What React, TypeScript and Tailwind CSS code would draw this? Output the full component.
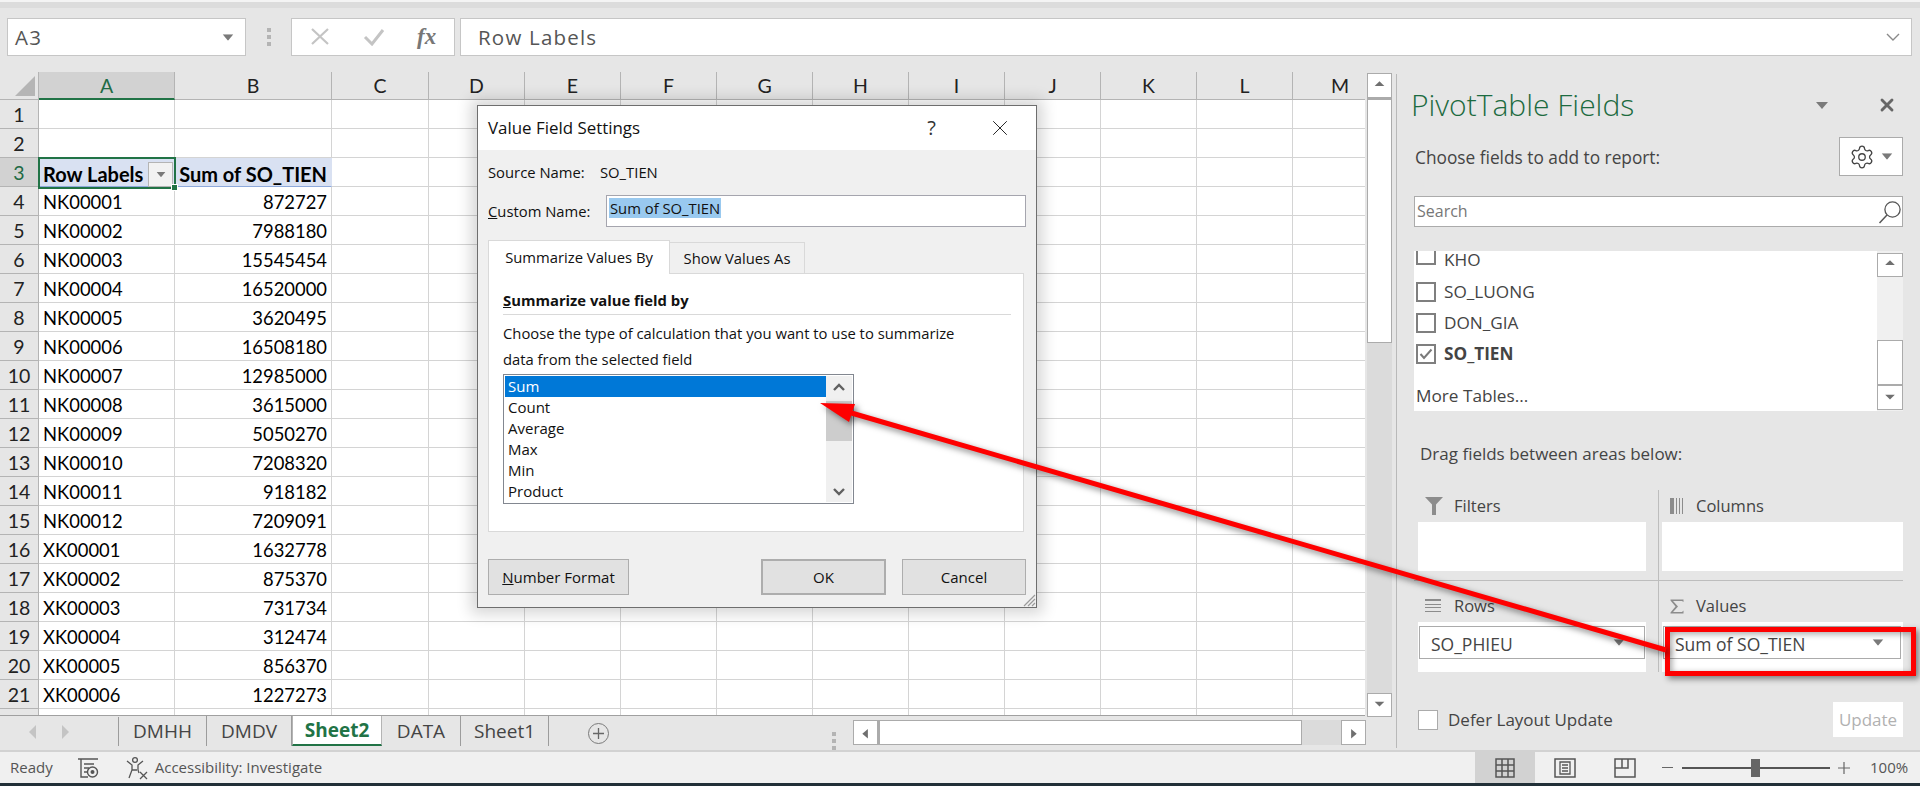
import { Settings, X as CloseIcon } from "lucide-react";

const colWidths = [136, 157, 97, 96, 96, 96, 96, 96, 96, 96, 96, 96, 73];
const colNames = ["A", "B", "C", "D", "E", "F", "G", "H", "I", "J", "K", "L", "M"];

const rows: [string, string][] = [
  ["NK00001", "872727"],
  ["NK00002", "7988180"],
  ["NK00003", "15545454"],
  ["NK00004", "16520000"],
  ["NK00005", "3620495"],
  ["NK00006", "16508180"],
  ["NK00007", "12985000"],
  ["NK00008", "3615000"],
  ["NK00009", "5050270"],
  ["NK00010", "7208320"],
  ["NK00011", "918182"],
  ["NK00012", "7209091"],
  ["XK00001", "1632778"],
  ["XK00002", "875370"],
  ["XK00003", "731734"],
  ["XK00004", "312474"],
  ["XK00005", "856370"],
  ["XK00006", "1227273"],
];

const Caret = ({ className = "" }: { className?: string }) => (
  <svg width="12" height="7" viewBox="0 0 12 7" className={className}>
    <path d="M0 0h12L6 7z" fill="#7a7a7a" />
  </svg>
);

const ArrowBtn = ({ dir, className = "" }: { dir: "up" | "down" | "left" | "right"; className?: string }) => {
  const d = {
    up: "M6 10h12l-6-6z",
    down: "M6 6h12l-6 6z",
    left: "M15 5v12L8 11z",
    right: "M9 5v12l7-6z",
  }[dir];
  return (
    <div className={`bg-white border border-[#ababab] flex items-center justify-center shrink-0 ${className}`}>
      <svg width="24" height="16" viewBox="0 0 24 20">
        <path d={d} fill="#6f6f6f" />
      </svg>
    </div>
  );
};

const RowHeader = ({ n, active }: { n?: number; active?: boolean }) => (
  <div
    className={`w-[39px] shrink-0 h-full border-r border-b border-[#b4b4b4] flex items-center justify-center pt-px font-['Lato'] text-[19.5px] ${
      active ? "bg-[#d2d2d2] text-[#1f6b45]" : "bg-[#e6e6e6] text-[#222]"
    }`}
  >
    {n}
  </div>
);

const SheetRow = ({ n, a, b, header }: { n?: number; a?: string; b?: string; header?: boolean }) => (
  <div className="flex h-[29px] shrink-0">
    <RowHeader n={n} active={header} />
    {colWidths.map((w, i) => (
      <div
        key={i}
        style={{ width: w }}
        className={`h-full shrink-0 border-r border-b border-[#d4d4d4] font-['Lato'] text-black flex items-center px-1 pt-[3px] overflow-hidden whitespace-nowrap ${
          header && i < 2 ? "bg-[#d9e1f2] border-b-[#8ea9db] border-r-[#d9e1f2] font-bold text-[20px]" : "bg-white text-[18.4px]"
        } ${i === 1 ? "justify-end" : ""}`}
      >
        {i === 0 ? a : i === 1 ? b : ""}
      </div>
    ))}
  </div>
);

const Checkbox = ({ checked, className = "" }: { checked?: boolean; className?: string }) => (
  <div className={`w-5 h-5 border-2 border-[#7f7f7f] bg-white flex items-center justify-center shrink-0 ${className}`}>
    {checked && (
      <svg width="14" height="12" viewBox="0 0 14 12">
        <path d="M1.5 6l3.5 4L12.5 1.5" fill="none" stroke="#7a7a7a" strokeWidth="2" />
      </svg>
    )}
  </div>
);

const DlgButton = ({ children, className = "" }: { children: React.ReactNode; className?: string }) => (
  <div className={`h-[36px] bg-[#e1e1e1] border border-[#adadad] flex items-center justify-center text-[15px] text-[#111] ${className}`}>
    {children}
  </div>
);

const ValueFieldDialog = () => (
  <div className="absolute left-[477px] top-[105px] w-[560px] h-[503px] bg-[#f0f0f0] border border-[#6e6e6e] shadow-[0_0_14px_6px_rgba(0,0,0,0.16)] flex flex-col text-[14.8px] text-[#111]">
    <div className="h-[44px] bg-white shrink-0 flex items-center pl-[10px] pr-[23px]">
      <span className="text-[16.9px] flex-1">Value Field Settings</span>
      <span className="text-[20px] text-[#333] mr-[51px]">?</span>
      <CloseIcon size={26} strokeWidth={0.9} color="#222" />
    </div>
    <div className="px-[10px] flex flex-col">
      <div className="flex items-center h-[20px] mt-[12px]">
        <span className="w-[112px]">Source Name:</span>
        <span>SO_TIEN</span>
      </div>
      <div className="flex items-center mt-[13px]">
        <span className="w-[118px]">
          <u>C</u>ustom Name:
        </span>
        <div className="w-[420px] h-[32px] bg-white border border-[#a5a5ae] flex items-start pl-[2px] pt-[2px]">
          <span className="bg-[#99c9ef] h-[20px] leading-[20px] px-px">Sum of SO_TIEN</span>
        </div>
      </div>
      <div className="flex items-end mt-[13px] h-[34px]">
        <div className="w-[182px] h-[34px] bg-white border border-b-0 border-[#d9d9d9] flex items-center justify-center relative z-10">
          Summarize Values By
        </div>
        <div className="w-[135px] h-[32px] border border-l-0 border-b-0 border-[#d9d9d9] flex items-center justify-center">
          Show Values As
        </div>
      </div>
      <div className="w-[536px] h-[259px] bg-white border border-[#d9d9d9] px-[14px] -mt-px flex flex-col">
        <div className="font-bold h-[41px] pt-[11px] leading-[24px] border-b border-[#d9d9d9] w-[508px] flex items-center shrink-0">
          <span>
            <u>S</u>ummarize value field by
          </span>
        </div>
        <div className="mt-[5px] leading-[26px]">
          <div>Choose the type of calculation that you want to use to summarize</div>
          <div>data from the selected field</div>
        </div>
        <div className="w-[351px] h-[130px] mt-[2px] border border-[#828790] p-px flex">
          <div className="w-[321px] flex flex-col text-[15px]">
            {["Sum", "Count", "Average", "Max", "Min", "Product"].map((t, i) => (
              <div key={t} className={`h-[21px] leading-[21px] pl-[3px] ${i === 0 ? "bg-[#0078d7] text-white" : ""}`}>
                {t}
              </div>
            ))}
          </div>
          <div className="flex-1 bg-[#f0f0f0] flex flex-col">
            <div className="h-[25px] flex items-center justify-center pb-[4px]">
              <svg width="14" height="10" viewBox="0 0 14 10">
                <path d="M2 8l5-5 5 5" fill="none" stroke="#606060" strokeWidth="2.4" />
              </svg>
            </div>
            <div className="h-[40px] bg-[#cdcdcd]" />
            <div className="flex-1 flex items-end justify-center pb-[5px]">
              <svg width="14" height="10" viewBox="0 0 14 10">
                <path d="M2 2l5 5 5-5" fill="none" stroke="#606060" strokeWidth="2.4" />
              </svg>
            </div>
          </div>
        </div>
      </div>
      <div className="flex mt-[27px]">
        <DlgButton className="w-[141px]">
          <span>
            <u>N</u>umber Format
          </span>
        </DlgButton>
        <DlgButton className="w-[125px] ml-[132px] border-2 border-[#0078d7]">OK</DlgButton>
        <DlgButton className="w-[124px] ml-[16px]">Cancel</DlgButton>
      </div>
    </div>
    <svg width="14" height="14" viewBox="0 0 14 14" className="absolute right-0 bottom-0">
      <path d="M13 2L2 13M13 6L6 13M13 10L10 13" stroke="#9a9a9a" strokeWidth="1.2" />
    </svg>
  </div>
);

const AreaLabel = ({ icon, label, className = "", iconBox }: { icon: React.ReactNode; label: string; className?: string; iconBox: string }) => (
  <div className={`flex items-center h-[32px] text-[16.5px] text-[#444] ${className}`}>
    <div className={`shrink-0 flex items-center ${iconBox}`}>{icon}</div>
    {label}
  </div>
);

const FieldsPane = () => (
  <div className="flex-1 border-l border-[#b9b9b9] ml-[3px] mt-[2px] mb-[2px] pl-[17px] pr-[17px] flex flex-col text-[#444] relative">
    <div className="flex items-center h-[44px] mt-[9px]">
      <span className="text-[30px] font-light text-[#1c6b40] flex-1 -ml-[3px] pb-[2px]">PivotTable Fields</span>
      <Caret className="mr-[49px]" />
      <CloseIcon size={20} strokeWidth={3.4} color="#666" className="mr-[6px]" />
    </div>
    <div className="flex items-center justify-between h-[39px] mt-[10px]">
      <span className="text-[17.3px] ml-px pt-[2px]">Choose fields to add to report:</span>
      <div className="w-[64px] h-[39px] bg-white border border-[#ababab] flex items-center justify-center gap-[6px]">
        <Settings size={26} strokeWidth={1.2} color="#444" />
        <Caret className="scale-90" />
      </div>
    </div>
    <div className="h-[31px] mt-[20px] bg-white border border-[#ababab] flex items-center pl-[2px] text-[16px] text-[#777] justify-between">
      <span className="pb-[2px]">Search</span>
      <svg width="24" height="26" viewBox="0 0 24 26">
        <circle cx="14.5" cy="10.5" r="7.6" fill="none" stroke="#555" strokeWidth="1.3" />
        <path d="M9 16L1.5 24" stroke="#555" strokeWidth="1.5" />
      </svg>
    </div>
    <div className="h-[160px] mt-[24px] bg-white flex overflow-hidden">
      <div className="flex-1 pl-[2px] -mt-[6px] text-[17.2px]">
        <div className="flex items-center gap-[8px] h-[31px] -mt-[1px]">
          <Checkbox className="-mt-[9px]" />
          KHO
        </div>
        <div className="flex items-center gap-[8px] h-[31px] mt-[1px]">
          <Checkbox />
          SO_LUONG
        </div>
        <div className="flex items-center gap-[8px] h-[31px]">
          <Checkbox />
          DON_GIA
        </div>
        <div className="flex items-center gap-[8px] h-[31px] font-bold">
          <Checkbox checked />
          SO_TIEN
        </div>
        <div className="mt-[15px] h-[24px] leading-[24px]">More Tables...</div>
      </div>
      <div className="w-[26px] h-full flex flex-col pt-[2px] bg-[#f0f0f0]">
        <ArrowBtn dir="up" className="h-[24px]" />
        <div className="h-[63px]" />
        <div className="h-[45px] bg-white border border-[#ababab]" />
        <ArrowBtn dir="down" className="h-[25px]" />
      </div>
    </div>
    <div className="text-[17px] mt-[31px] ml-[6px] h-[24px] leading-[24px]">Drag fields between areas below:</div>
    <div className="mt-[24px] grid grid-cols-[245px_1fr] relative">
      <div className="pr-[12px] pl-[4px] border-r border-b border-[#bdbdbd] pb-[9px]">
        <AreaLabel
          label="Filters"
          iconBox="w-[36px] pl-[6px]"
          icon={
            <svg width="20" height="18" viewBox="0 0 20 18">
              <path d="M1 0h18l-7 7.5V18H8V7.500z" fill="#8c8c8c" />
            </svg>
          }
        />
        <div className="h-[49px] bg-white" />
      </div>
      <div className="pl-[3px] border-b border-[#bdbdbd] pb-[9px]">
        <AreaLabel
          label="Columns"
          className="pl-[8px]"
          iconBox="w-[26px]"
          icon={
            <svg width="14" height="16" viewBox="0 0 14 16">
              <path d="M0 0h4v16H0zM6 0h1v16H6zM9 0h1v16H9zM12 0h1v16h-1z" fill="#8c8c8c" />
            </svg>
          }
        />
        <div className="h-[49px] bg-white" />
      </div>
      <div className="pr-[12px] pl-[4px] border-r border-[#bdbdbd]">
        <AreaLabel
          label="Rows"
          className="mt-[9px]"
          iconBox="w-[36px] pl-[7px]"
          icon={
            <svg width="16" height="14" viewBox="0 0 16 14">
              <path d="M0 0h16v2H0zM0 5h16v1H0zM0 8h16v1H0zM0 12h16v1H0z" fill="#8c8c8c" />
            </svg>
          }
        />
        <div className="h-[50px] bg-white pt-[4px] px-px">
          <div className="h-[33px] border border-[#ababab] flex items-center justify-between pl-[11px] pr-[19px] text-[17.5px]">
            <span className="pt-[3px]">SO_PHIEU</span>
            <Caret className="scale-90" />
          </div>
        </div>
      </div>
      <div className="pl-[3px]">
        <AreaLabel
          label="Values"
          className="mt-[9px] pl-[8px]"
          iconBox="w-[26px]"
          icon={
            <svg width="14" height="15" viewBox="0 0 14 15">
              <path d="M0.5 0.500h13v2.500L12 2H3l5 5.500L3 13h9l1.500-1.500V14.500H0.500V13.500L5.500 7.500L0.500 1.500z" fill="#8c8c8c" />
            </svg>
          }
        />
        <div className="h-[50px] bg-white pt-[4px] pl-px pr-[2px]">
          <div className="h-[33px] border border-[#ababab] flex items-center justify-between pl-[11px] pr-[16px] text-[17.5px]">
            <span className="pt-[3px]">Sum of SO_TIEN</span>
            <Caret className="scale-90" />
          </div>
        </div>
      </div>
    </div>
    <div className="flex items-center justify-between mt-[30px] pl-[4px]">
      <div className="flex items-center gap-[10px] text-[17px]">
        <Checkbox className="border! border-[#ababab]!" />
        Defer Layout Update
      </div>
      <div className="w-[70px] h-[35px] bg-white text-[#b1b1b1] text-[17px] flex items-center justify-center">Update</div>
    </div>
  </div>
);

const Tab = ({ label, active }: { label: string; active?: boolean }) => (
  <div
    className={`h-[30px] flex items-center justify-center text-[19px] ${
      active ? "bg-white text-[#217346] font-bold w-[90px] border-b-[2px] border-[#217346] border-x border-x-[#b4b4b4]" : "text-[#444] border-r border-[#9c9c9c]"
    }`}
  >
    {label}
  </div>
);

export default function App() {
  return (
    <div className="relative w-[1920px] h-[786px] overflow-hidden bg-[#e6e6e6] font-['Open_Sans',sans-serif] flex flex-col">
      {/* TOP STRIP */}
      <div className="h-[8px] shrink-0 border-t-2 border-[#f4f4f4] bg-[#dcdcdc]" />

      {/* FORMULA BAR */}
      <div className="h-[64px] shrink-0 pt-[10px] pl-[7px] pr-[8px] flex items-start">
        <div className="w-[239px] h-[38px] bg-white border border-[#c6c6c6] flex items-center justify-between pl-[7px] pr-[11px] text-[20.5px] tracking-[1.2px] text-[#555]">
          A3
          <Caret className="scale-90" />
        </div>
        <div className="w-[45px] h-[38px] flex flex-col items-center justify-center gap-[3px]">
          <div className="w-[4px] h-[4px] bg-[#b4b4b4]" />
          <div className="w-[4px] h-[4px] bg-[#b4b4b4]" />
          <div className="w-[4px] h-[4px] bg-[#b4b4b4]" />
        </div>
        <div className="w-[164px] h-[38px] bg-white border border-[#c6c6c6] flex items-center pl-[18px]">
          <svg width="20" height="18" viewBox="0 0 20 18">
            <path d="M2 1l16 15M18 1L2 16" stroke="#c4c4c4" strokeWidth="2.2" />
          </svg>
          <svg width="22" height="18" viewBox="0 0 22 18" className="ml-[33px]">
            <path d="M2 9l7 7L20 2" fill="none" stroke="#c4c4c4" strokeWidth="3" />
          </svg>
          <span className="ml-[32px] font-['Liberation_Serif'] italic font-bold text-[23px] text-[#777]">fx</span>
        </div>
        <div className="flex-1 ml-[5px] h-[38px] bg-white border border-[#c6c6c6] flex items-center justify-between pl-[17px] pr-[10px] text-[20.5px] tracking-[1.2px] text-[#555]">
          Row Labels
          <svg width="16" height="10" viewBox="0 0 16 10">
            <path d="M2 2l6 6 6-6" fill="none" stroke="#8a8a8a" strokeWidth="1.4" />
          </svg>
        </div>
      </div>

      {/* MAIN AREA */}
      <div className="flex flex-1 min-h-0">
        <div className="w-[1393px] shrink-0 flex flex-col">
          <div className="h-[644px] shrink-0 flex">
            {/* SHEET */}
            <div className="w-[1365px] shrink-0 flex flex-col overflow-hidden border-b border-[#a0a0a0] relative">
              <div className="flex h-[28px] shrink-0">
                <div className="w-[39px] shrink-0 relative bg-[#e6e6e6] border-r border-b border-[#b4b4b4]">
                  <svg width="24" height="24" viewBox="0 0 24 24" className="absolute right-[1px] bottom-[1px]">
                    <path d="M22 2v20H2z" fill="#b5b5b5" />
                  </svg>
                </div>
                {colWidths.map((w, i) => (
                  <div
                    key={i}
                    style={{ width: w }}
                    className={`shrink-0 h-full flex items-center justify-center pt-px font-['Lato'] text-[19.5px] border-r ${
                      i === 0
                        ? "bg-[#d2d2d2] text-[#1f6b45] border-b-2 border-b-[#217346] border-r-[#b4b4b4]"
                        : "text-[#222] border-b border-[#b4b4b4]"
                    } ${i === 12 ? "pl-[22px]" : ""}`}
                  >
                    {colNames[i]}
                  </div>
                ))}
              </div>
              <SheetRow n={1} />
              <SheetRow n={2} />
              <SheetRow n={3} a="Row Labels" b="Sum of SO_TIEN" header />
              {rows.map((r, i) => (
                <SheetRow key={r[0]} n={i + 4} a={r[0]} b={r[1]} />
              ))}
              <SheetRow />
              {/* SELECTED CELL A3 */}
              <div className="absolute left-[38px] top-[85px] w-[138px] h-[32px] border-2 border-[#217346]">
                <div className="absolute right-[1px] top-[3px] w-[25px] h-[25px] bg-[#f2f2f2] border border-[#b4b4b4] flex items-center justify-center">
                  <Caret className="scale-75" />
                </div>
                <div className="absolute -right-[4px] -bottom-[4px] w-[7px] h-[7px] bg-[#217346] border border-white" />
              </div>
            </div>
            {/* VERTICAL SCROLLBAR */}
            <div className="w-[25px] ml-[2px] mt-px h-[644px] flex flex-col">
              <ArrowBtn dir="up" className="h-[25px]" />
              <div className="h-[245px] bg-white border border-t-2 border-[#ababab]" />
              <div className="h-[351px] bg-[#dbdbdb]" />
              <ArrowBtn dir="down" className="h-[24px]" />
            </div>
          </div>

          {/* SHEET TABS */}
          <div className="h-[34px] shrink-0 flex items-start relative">
            <div className="w-[119px] h-[29px] flex items-center pl-[28px] gap-[24px] border-r border-[#9c9c9c] mt-px">
              <svg width="9" height="14" viewBox="0 0 9 14">
                <path d="M8 0v14L1 7z" fill="#c4c4c4" />
              </svg>
              <svg width="9" height="14" viewBox="0 0 9 14">
                <path d="M1 0v14l7-7z" fill="#c4c4c4" />
              </svg>
            </div>
            <div className="flex">
              <div className="w-[88px]"><Tab label="DMHH" /></div>
              <div className="w-[85px]"><Tab label="DMDV" /></div>
              <Tab label="Sheet2" active />
              <div className="w-[79px]"><Tab label="DATA" /></div>
              <div className="w-[88px]"><Tab label="Sheet1" /></div>
            </div>
            <div className="w-[21px] h-[21px] rounded-full border border-[#7a7a7a] ml-[39px] mt-[7px] flex items-center justify-center text-[#666]">
              <svg width="11" height="11" viewBox="0 0 11 11">
                <path d="M5.500 0v11M0 5.500h11" stroke="#666" strokeWidth="1.3" />
              </svg>
            </div>
            <div className="ml-[223px] mt-[16px] flex flex-col gap-[3px]">
              <div className="w-[4px] h-[4px] bg-[#b4b4b4]" />
              <div className="w-[4px] h-[4px] bg-[#b4b4b4]" />
              <div className="w-[4px] h-[4px] bg-[#b4b4b4]" />
            </div>
            <div className="ml-[17px] mt-[4px] flex h-[25px]">
              <ArrowBtn dir="left" className="w-[25px] h-full" />
              <div className="w-[424px] h-full bg-white border border-l-2 border-[#ababab]" />
              <div className="w-[39px] h-full bg-[#dbdbdb]" />
              <ArrowBtn dir="right" className="w-[25px] h-full" />
            </div>
          </div>
        </div>

        <FieldsPane />
      </div>

      {/* STATUS BAR */}
      <div className="h-[33px] shrink-0 bg-[#f0f0f0] border-t-2 border-[#d2d2d2] flex items-center text-[15px] text-[#555]">
        <span className="ml-[10px]">Ready</span>
        <svg width="22" height="22" viewBox="0 0 22 22" className="ml-[24px]">
          <path d="M1 2h20M4 2v18h7" fill="none" stroke="#555" strokeWidth="1.4" />
          <path d="M7 7h10M7 11h5M7 15h3" stroke="#555" strokeWidth="1.4" />
          <circle cx="15.500" cy="15" r="5" fill="none" stroke="#555" strokeWidth="1.4" />
          <circle cx="15.500" cy="15" r="2" fill="#555" />
        </svg>
        <svg width="24" height="24" viewBox="0 0 24 24" className="ml-[26px]">
          <g fill="none" stroke="#555" strokeWidth="1.3">
            <circle cx="10" cy="4" r="2.400" />
            <path d="M2 5l5 4v5l-3 8M18 5l-5 4v5l1 3M7 14h5" />
            <path d="M15 16l7 7M22 16l-7 7" />
          </g>
        </svg>
        <span className="ml-[6px]">Accessibility: Investigate</span>
        <div className="ml-auto flex items-center h-full">
          <div className="w-[60px] h-full bg-[#d2d2d2] flex items-center justify-center">
            <svg width="20" height="20" viewBox="0 0 20 20">
              <path d="M1 1h18v18H1zM1 7h18M1 13h18M7 1v18M13 1v18" fill="none" stroke="#555" strokeWidth="1.500" />
            </svg>
          </div>
          <svg width="22" height="20" viewBox="0 0 22 20" className="ml-[19px]">
            <path d="M1 1h20v18H1z" fill="none" stroke="#555" strokeWidth="1.500" />
            <path d="M6 4h10v12H6zM8 7h6M8 10h6M8 13h6" fill="none" stroke="#555" strokeWidth="1.300" />
          </svg>
          <svg width="22" height="20" viewBox="0 0 22 20" className="ml-[38px]">
            <path d="M1 1h20v18H1zM8 1v9h6V1M1 10h7" fill="none" stroke="#555" strokeWidth="1.500" />
          </svg>
          <span className="ml-[26px] w-[11px] h-px bg-[#666]" />
          <div className="ml-[9px] w-[148px] h-[2px] bg-[#555] relative">
            <div className="absolute left-[69px] -top-[8px] w-[9px] h-[18px] bg-[#666]" />
          </div>
          <svg width="12" height="12" viewBox="0 0 12 12" className="ml-[8px]">
            <path d="M6 0v12M0 6h12" stroke="#666" strokeWidth="1.200" />
          </svg>
          <span className="ml-[20px] mr-[10px] w-[40px]">100%</span>
        </div>
      </div>
      <div className="h-[3px] shrink-0 bg-[#223038]" />

      <ValueFieldDialog />

      {/* RED ANNOTATION */}
      <div className="absolute left-[1665px] top-[627px] w-[251px] h-[49px] border-[5px] border-[#fe0000] shadow-[3px_3px_6px_rgba(0,0,0,0.45),inset_2px_2px_6px_rgba(0,0,0,0.35)]" />
      <svg width="1920" height="786" viewBox="0 0 1920 786" className="absolute left-0 top-0 pointer-events-none drop-shadow-[3px_3px_3px_rgba(0,0,0,0.5)]">
        <path d="M1666 650L848 412" stroke="#fe0000" strokeWidth="5" fill="none" />
        <path d="M820 403L855 404L849 422z" fill="#fe0000" />
      </svg>
    </div>
  );
}
